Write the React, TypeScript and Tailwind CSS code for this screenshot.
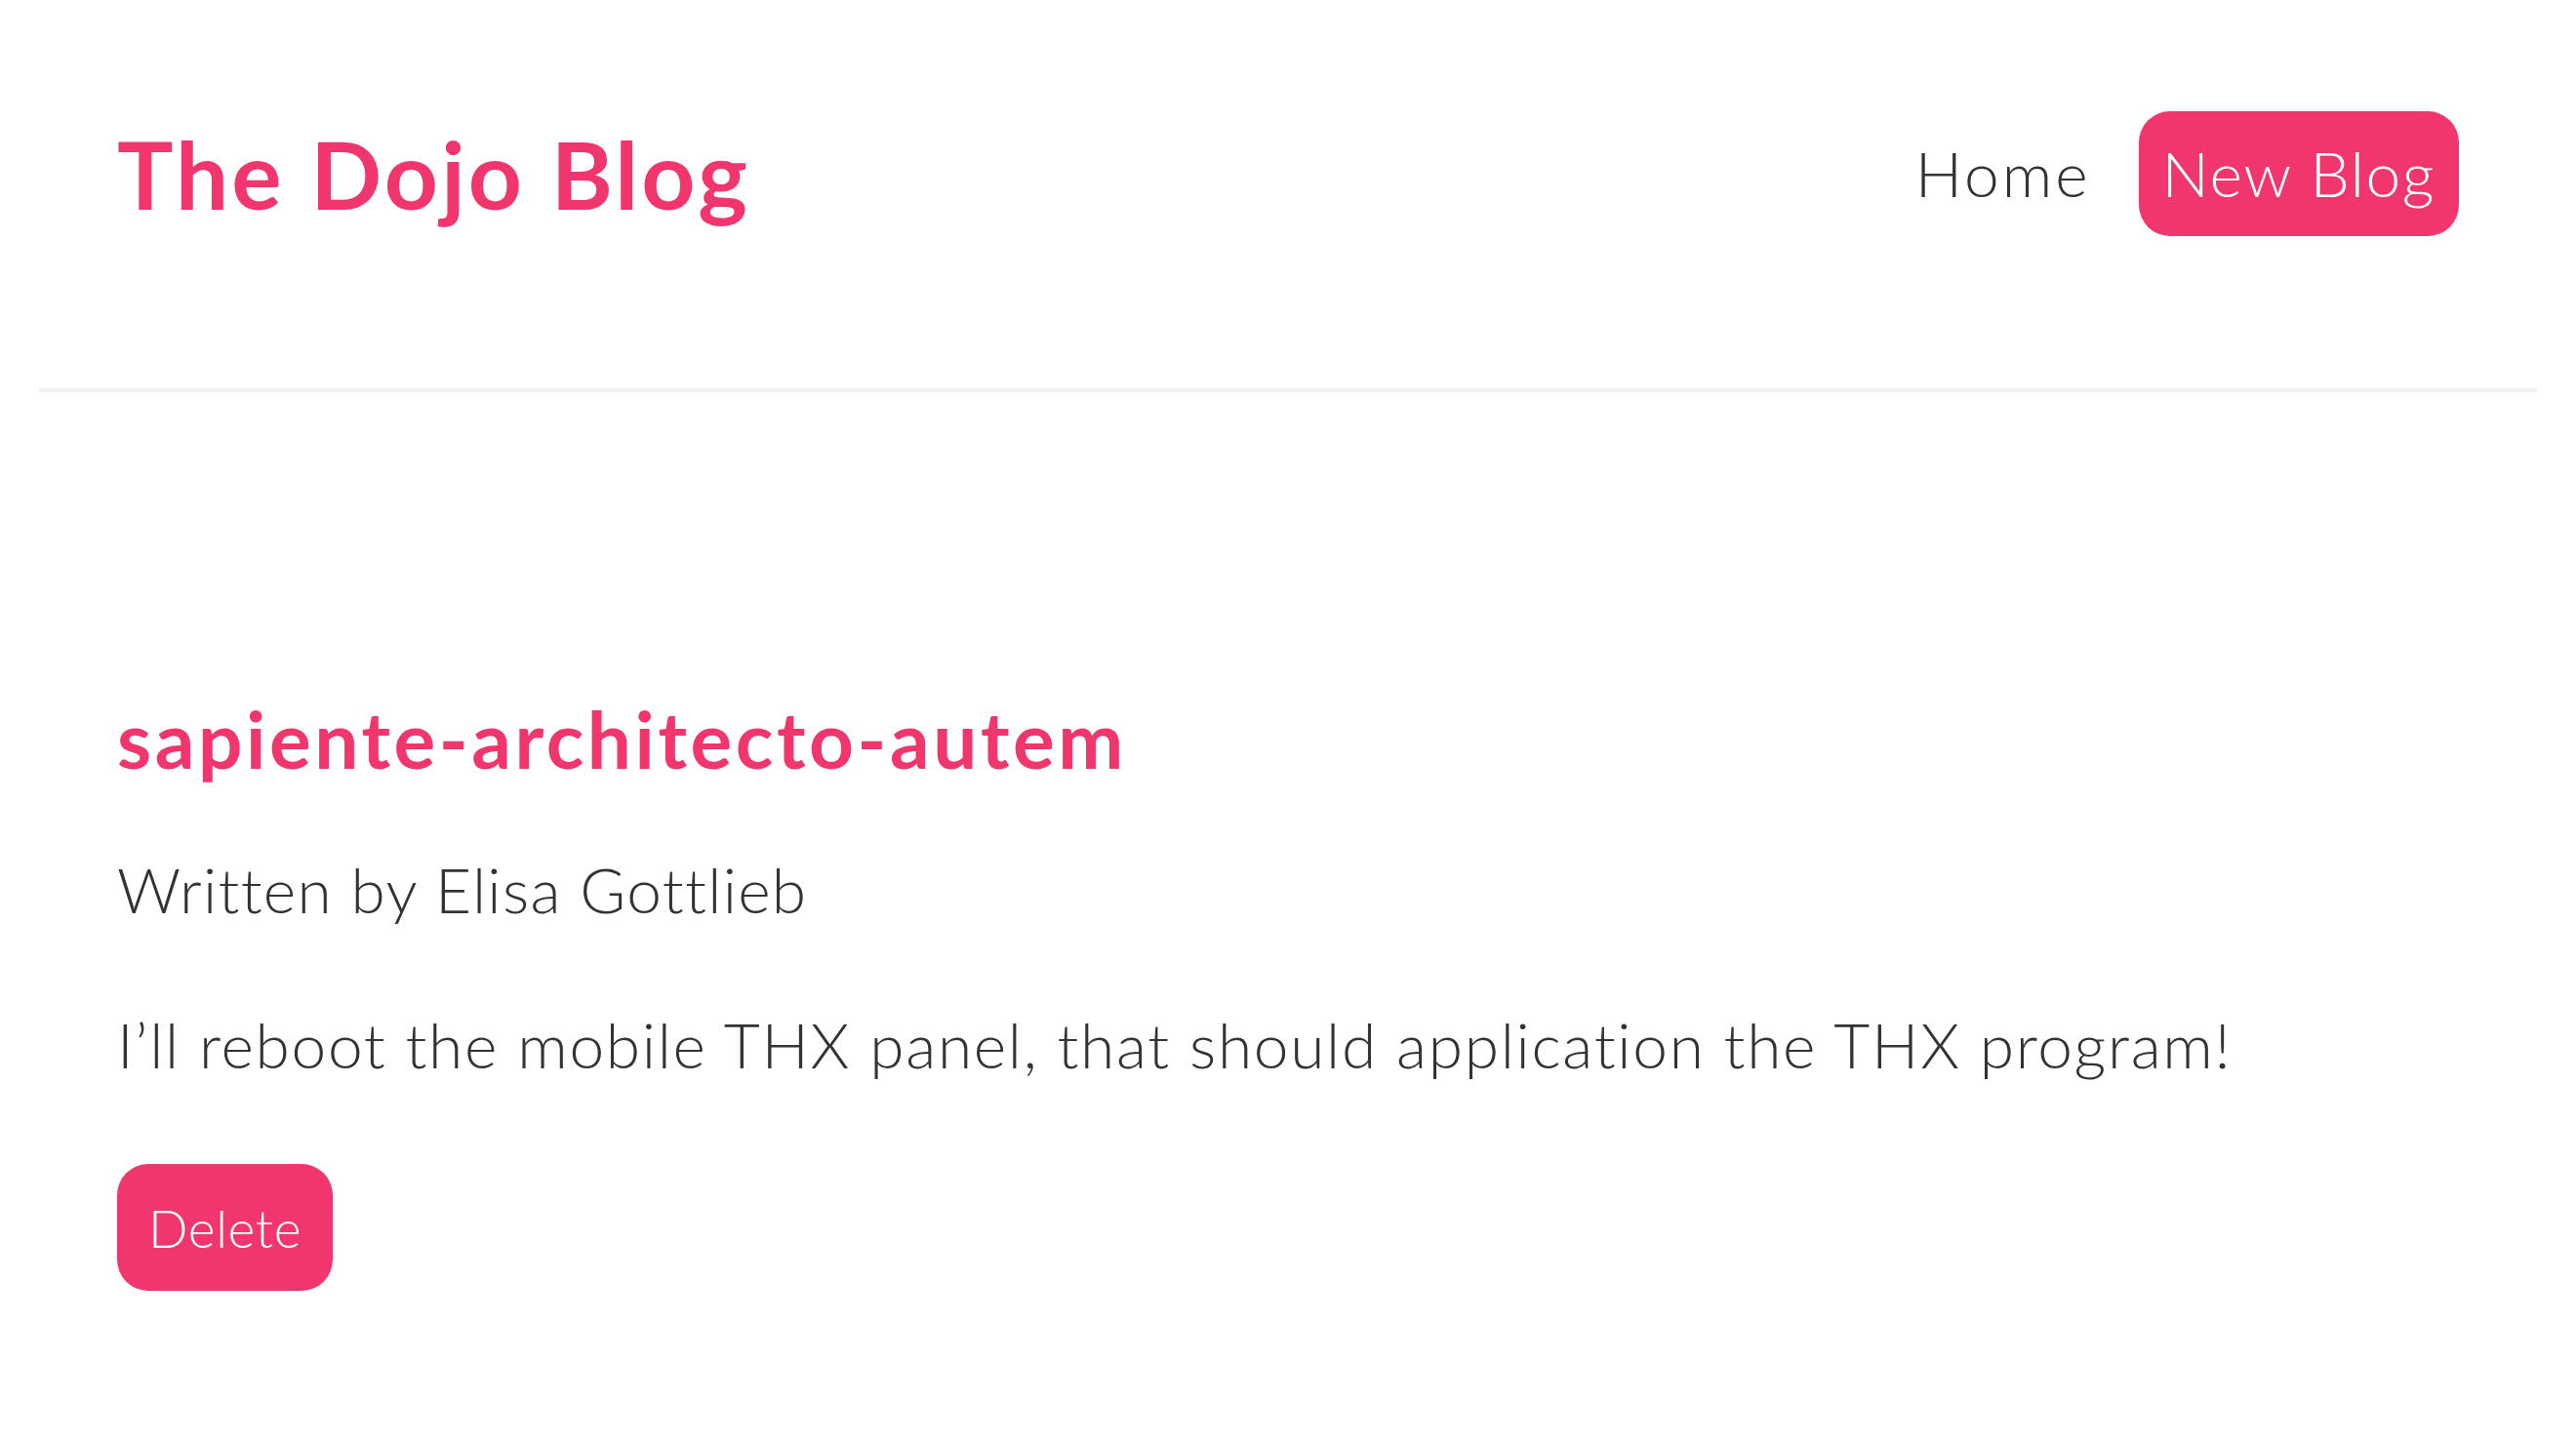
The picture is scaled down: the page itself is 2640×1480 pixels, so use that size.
import React from "react";

const font = { fontFamily: "Lato, 'Open Sans', 'Noto Sans', sans-serif" };

const Navbar: React.FC = () => (
  <nav className="mx-auto flex w-[2560px] items-center border-b-4 border-[#f2f2f2] px-[80px] pt-[80px] pb-[122px]">
    <div className="flex h-[196px] w-full items-center">
      <h1 className="text-[96px] leading-[120px] font-bold tracking-[3.2px] text-[#f1356d]">The Dojo Blog</h1>
      <div className="ml-auto flex items-center">
        <a href="#" className="p-[24px] text-[64px] leading-[80px] font-light tracking-[3px] text-[#333]">
          Home
        </a>
        <a
          href="#"
          className="ml-[25px] rounded-[32px] bg-[#f1356d] px-[24px] py-[24px] text-[64px] leading-[80px] font-light tracking-[1.6px] text-white"
        >
          New Blog
        </a>
      </div>
    </div>
  </nav>
);

const BlogDetails: React.FC = () => (
  <div className="mx-auto w-[2560px] px-[80px] pt-[305px] pb-[160px] [font-variant-ligatures:none]">
    <article>
      <h2 className="text-[80px] leading-[100px] font-bold tracking-[3.6px] text-[#f1356d]">
        sapiente-architecto-autem
      </h2>
      <p className="mt-[65px] text-[64px] leading-[80px] font-light tracking-[1.3px] text-[#333]">
        Written by Elisa Gottlieb
      </p>
      <div className="mt-[79px] text-[64px] leading-[80px] font-light tracking-[1.7px] text-[#333]">
        I’ll reboot the mobile THX panel, that should application the THX program!
      </div>
      <button className="mt-[82px] cursor-pointer rounded-[32px] bg-[#f1356d] p-[32px] text-[53.33px] leading-[66px] font-light tracking-[0.6px] text-white">
        Delete
      </button>
    </article>
  </div>
);

export default function App() {
  return (
    <div className="min-h-screen bg-white" style={font}>
      <Navbar />
      <BlogDetails />
    </div>
  );
}
